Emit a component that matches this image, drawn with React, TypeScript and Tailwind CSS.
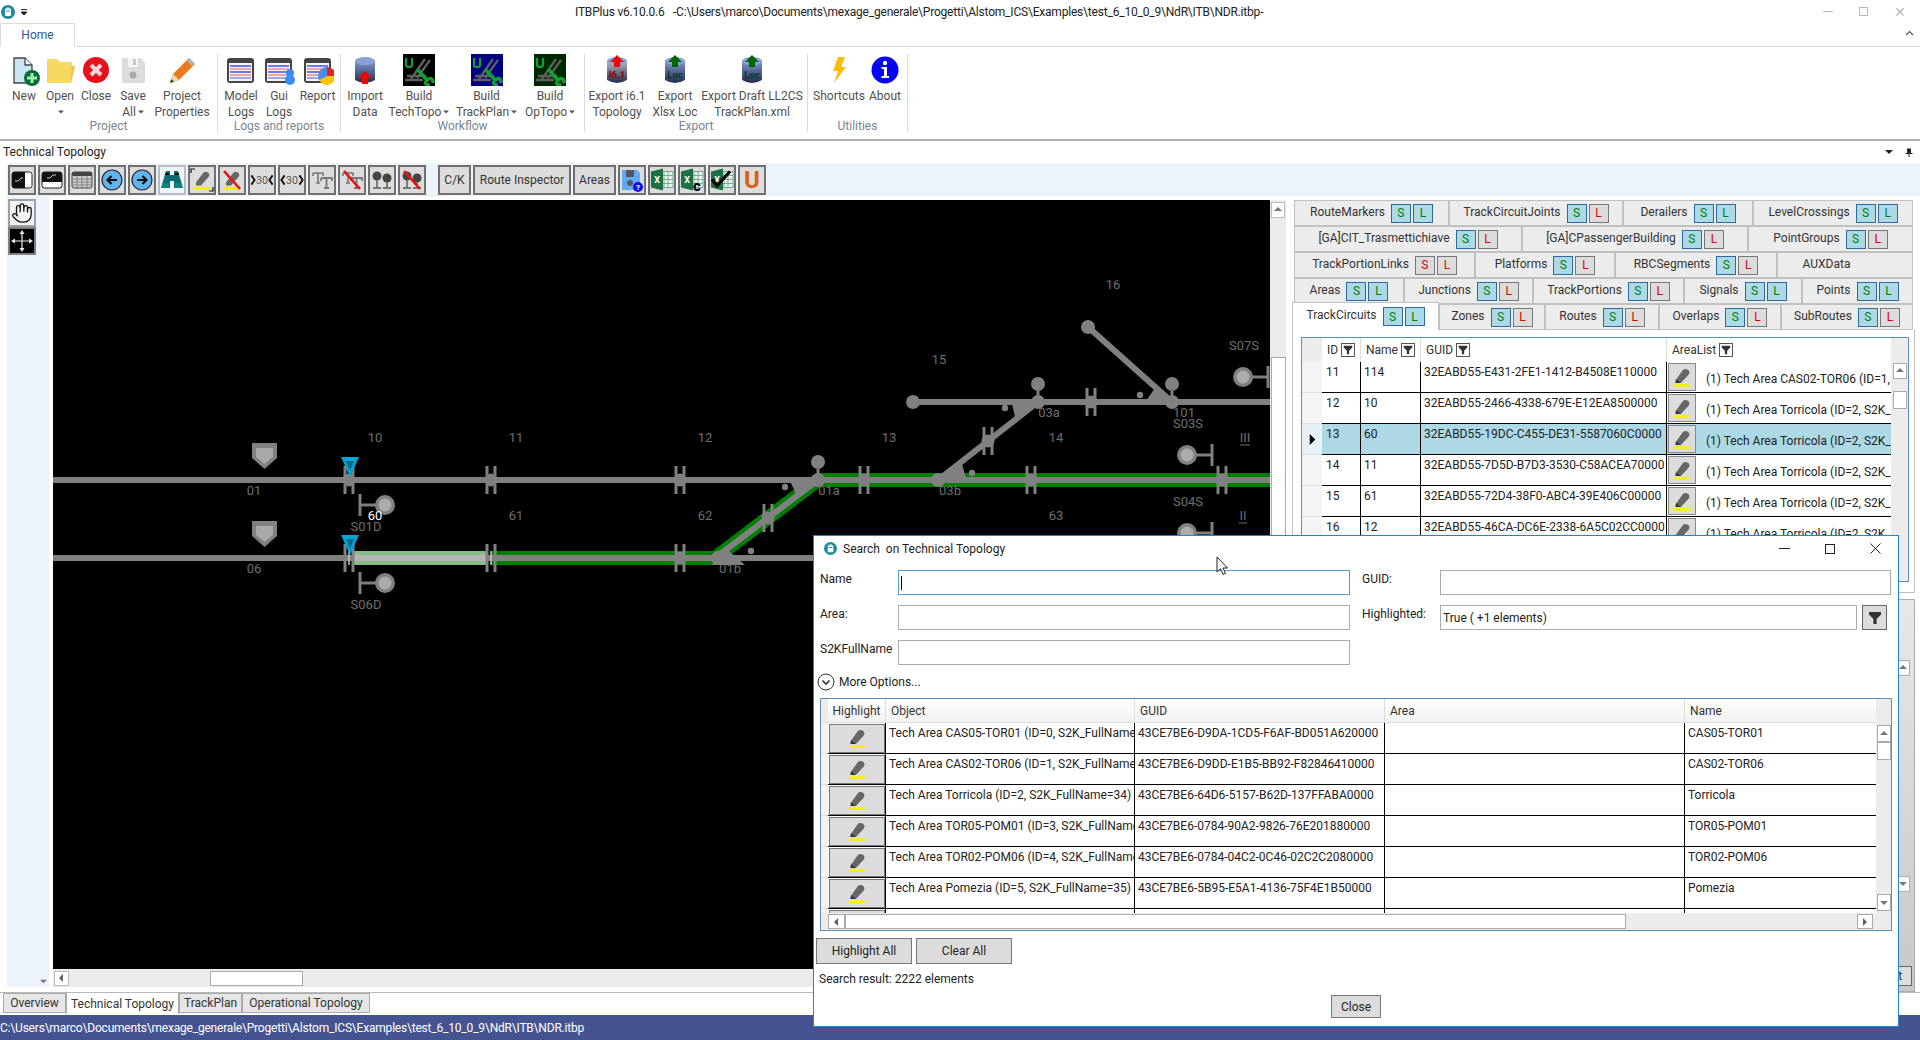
import { Hand } from "lucide-react";
import type { ReactNode } from "react";

const Arrow = ({ dir, color = "#606060", size = 8 }: { dir: "up" | "down" | "left" | "right"; color?: string; size?: number }) => {
  const pts = { up: "0,5 4,1 8,5", down: "0,2 8,2 4,6", left: "5,0 5,8 1,4", right: "2,0 2,8 6,4" }[dir];
  return (
    <svg width={size} height={size} viewBox="0 0 8 8">
      <polygon points={pts} fill={color} />
    </svg>
  );
};

const AppIcon = ({ size = 14 }: { size?: number }) => (
  <svg width={size} height={size} viewBox="0 0 14 14">
    <circle cx="7" cy="7" r="7" fill="#1d8a9e" />
    <rect x="4" y="3.5" width="6" height="7.5" rx="1" fill="#fff" />
    <rect x="5" y="5.5" width="4" height="1" fill="#1d8a9e" />
    <rect x="5.5" y="2.5" width="3" height="1.5" fill="#cde" />
  </svg>
);

const Marker = ({ size = 22 }: { size?: number }) => (
  <svg width={size} height={size} viewBox="0 0 20 20">
    <path d="M4.5 12.5 L11 3.5 Q13 1.8 15.5 3.5 Q17.8 5.5 16 8 L9 15.5 L4.5 15.5 Z" fill="#666" />
    <path d="M4 15.5 L4.5 12 L9 15.5 Z" fill="#333" />
    <rect x="3" y="16.5" width="14" height="2.5" fill="#f8f000" />
  </svg>
);

const Slash = () => <line x1="4" y1="3" x2="20" y2="21" stroke="#ee1111" strokeWidth="2.6" />;

const NewIcon = () => (
  <svg width="32" height="32" viewBox="0 0 32 32">
    <path d="M6 4 H17 L24 11 V29 H6 Z" fill="#cbe6f2" stroke="#444" strokeWidth="1.3" />
    <path d="M17 4 V11 H24" fill="#fff" stroke="#444" strokeWidth="1.3" />
    <circle cx="24" cy="24" r="8" fill="#0a6b3a" />
    <path d="M24 19 V29 M19 24 H29" stroke="#9ff0a8" strokeWidth="3" />
  </svg>
);
const FolderIcon = () => (
  <svg width="32" height="32" viewBox="0 0 32 32">
    <path d="M3 5 H13 L16 8 H28 V12 H31 L27 29 H3 Z" fill="#f7d860" />
    <path d="M27 12 H31 L27 29 Z" fill="#eec94a" />
  </svg>
);
const CloseIcon = () => (
  <svg width="32" height="32" viewBox="0 0 32 32">
    <circle cx="16" cy="16" r="13" fill="#e8101c" />
    <path d="M11 11 L21 21 M21 11 L11 21" stroke="#f6d8d8" strokeWidth="4" />
  </svg>
);
const SaveIcon = () => (
  <svg width="32" height="32" viewBox="0 0 32 32">
    <path d="M5 4 H24 L28 9 V29 H5 Z" fill="#dcdcdc" />
    <rect x="11" y="4" width="10" height="9" fill="#f4f4f4" />
    <rect x="16" y="5" width="3" height="6" fill="#c8c8c8" />
    <circle cx="16" cy="21" r="3.5" fill="#a8a8a8" />
  </svg>
);
const PencilIcon = () => (
  <svg width="32" height="32" viewBox="0 0 32 32">
    <path d="M4 29 L7 20 L23 4 L29 10 L13 26 Z" fill="#ea7a1e" />
    <path d="M23 4 L29 10 L26.5 12.5 L20.5 6.5 Z" fill="#b0b0b0" />
    <path d="M4 29 L7 20 L13 26 Z" fill="#f3d9b0" />
    <path d="M4 29 L5.4 25 L8 27.5 Z" fill="#333" />
  </svg>
);
const LogIcon = ({ extra }: { extra?: "blob" | "pie" }) => (
  <svg width="32" height="32" viewBox="0 0 32 32">
    <rect x="2" y="4" width="27" height="25" rx="3" fill="#444" />
    <rect x="4" y="9" width="23" height="18" fill="#f4f4f4" />
    <path d="M5 12 H26" stroke="#3a50ff" strokeWidth="1.5" />
    <path d="M5 15 H26" stroke="#f08a8a" strokeWidth="1.5" />
    <path d="M5 18 H26" stroke="#3a50ff" strokeWidth="1.5" />
    <path d="M5 21 H26" stroke="#f08a8a" strokeWidth="1.5" />
    <path d="M5 24 H26" stroke="#8a8af0" strokeWidth="1.5" />
    {extra === "blob" && (
      <g fill="#3d8df0">
        <circle cx="27" cy="19" r="4" />
        <circle cx="27" cy="26" r="5" />
      </g>
    )}
    {extra === "pie" && (
      <g>
        <path d="M25 22 V13 A9 9 0 0 1 34 22 Z" fill="#e82020" />
        <path d="M25 22 H34 A9 9 0 0 1 17 26 Z" fill="#f7c400" />
        <path d="M25 22 L17 26 A9 9 0 0 1 25 13 Z" fill="#4a8ae8" />
      </g>
    )}
  </svg>
);
const Cylinder = ({ id, arrow, bottom, label, labelColor, top = "#7f99cf" }: { id: string; arrow: string; bottom?: boolean; label?: string; labelColor?: string; top?: string }) => (
  <svg width="32" height="32" viewBox="0 0 32 32">
    <defs>
      <linearGradient id={id} x1="0" y1="0" x2="0" y2="1">
        <stop offset="0" stopColor={top} />
        <stop offset="1" stopColor="#222c48" />
      </linearGradient>
    </defs>
    <path d="M6 7 H26 V26 Q16 32 6 26 Z" fill={`url(#${id})`} />
    <ellipse cx="16" cy="7" rx="10" ry="4" fill="#8aa3d6" />
    {label && (
      <text x="16" y="24" textAnchor="middle" fontSize="9.5" fontWeight="700" fill={labelColor}>
        {label}
      </text>
    )}
    {bottom ? <path d="M16 17 L23 24 H19 V30 H13 V24 H9 Z" fill={arrow} /> : <path d="M16 1 L23 8 H19 V13 H13 V8 H9 Z" fill={arrow} />}
  </svg>
);
const BuildIcon = ({ bg }: { bg: string }) => (
  <svg width="32" height="32" viewBox="0 0 32 32">
    <rect width="32" height="32" fill={bg} />
    <path d="M3 4 V11 Q3 13 6 13 Q9 13 9 11 V4" stroke="#0aa03c" strokeWidth="2.2" fill="none" />
    <path d="M8 25 L22 5 M14 24 L27 6 M4 22 H23 M2 26 H20" stroke="#5e5e5e" strokeWidth="2.4" />
    <path d="M14 15 L24 26 M24 26 Q30 22 30 29 M24 26 Q20 31 27 31" stroke="#0ea02e" strokeWidth="3.4" fill="none" />
  </svg>
);
const BoltIcon = () => (
  <svg width="32" height="32" viewBox="0 0 32 32">
    <path d="M15 3 H22 L18 13 H23 L11 29 L15 17 H10 Z" fill="#fdbb10" />
  </svg>
);
const AboutIcon = () => (
  <svg width="32" height="32" viewBox="0 0 32 32">
    <circle cx="16" cy="16" r="13.5" fill="#0505f5" />
    <circle cx="16" cy="9" r="2.2" fill="#fff" />
    <path d="M12.5 13 H18 V22 H20 V24 H12.5 V22 H15 V15 H12.5 Z" fill="#fff" />
  </svg>
);

const RibbonBtn = ({ w, icon, lines, dropdown }: { w: number; icon: ReactNode; lines: string[]; dropdown?: boolean }) => (
  <div className="flex flex-col items-center text-[12px] text-[#505050] leading-[16px] whitespace-nowrap shrink-0" style={{ width: w }}>
    <div className="h-[32px] mb-[2px] flex items-center justify-center">{icon}</div>
    <div>{lines[0]}</div>
    <div className="flex items-center justify-center h-[16px]">
      {lines[1]}
      {dropdown && (
        <span className="ml-[2px]">
          <Arrow dir="down" color="#555" size={6} />
        </span>
      )}
    </div>
  </div>
);

const RibbonGroup = ({ w, pl, label, children }: { w: number; pl: number; label: string; children: ReactNode }) => (
  <div className="h-[78px] border-r border-[#dcdcdc] flex flex-col shrink-0" style={{ width: w, paddingLeft: pl }}>
    <div className="flex h-[66px]">{children}</div>
    <div className="text-[12px] leading-[12px] text-center text-[#7a8594]" style={{ marginLeft: -pl }}>
      {label}
    </div>
  </div>
);

const TBtn = ({ children, light }: { children: ReactNode; light?: boolean }) => (
  <div className={`w-[28px] h-[30px] border-2 flex items-center justify-center shrink-0 ${light ? "bg-[#f2f5f8] border-[#b4bcc4]" : "bg-[#dcdcdc] border-[#707070]"}`}>{children}</div>
);

const WinIcon = ({ side }: { side: "left" | "top" }) => (
  <svg width="24" height="24" viewBox="0 0 24 24">
    <rect x="2" y="4" width="20" height="16" rx="2.5" fill="#fff" stroke="#222" strokeWidth="1" />
    {side === "left" ? <path d="M4 4 H15 V20 H4 Q2 20 2 18 V6 Q2 4 4 4 Z" fill="#111" /> : <path d="M4 4 H20 Q22 4 22 6 V14 H2 V6 Q2 4 4 4 Z" fill="#111" />}
    <path d={side === "left" ? "M5 13 H8 L11 10 H13" : "M7 10 H10 L13 7 H16"} stroke="#ccc" strokeWidth="1" fill="none" />
  </svg>
);
const TableIcon = () => (
  <svg width="24" height="24" viewBox="0 0 24 24">
    <rect x="2" y="4" width="20" height="16" rx="2" fill="#ccc" stroke="#444" />
    <rect x="2" y="4" width="20" height="4" rx="1.5" fill="#444" />
    <path d="M2 11 H22 M2 14 H22 M2 17 H22 M7 8 V20 M12 8 V20 M17 8 V20" stroke="#777" strokeWidth="0.8" />
  </svg>
);
const CircleArrow = ({ right }: { right?: boolean }) => (
  <svg width="24" height="24" viewBox="0 0 24 24">
    <circle cx="12" cy="12" r="10" fill="#62b4f0" stroke="#223" strokeWidth="1.2" />
    <path d={right ? "M7 12 H16 M12.5 8 L16.5 12 L12.5 16" : "M17 12 H8 M11.5 8 L7.5 12 L11.5 16"} stroke="#111" strokeWidth="2.2" fill="none" />
  </svg>
);
const BinocularIcon = () => (
  <svg width="24" height="24" viewBox="0 0 24 24">
    <path d="M6 3 H10 V7 H14 V3 H18 L23 20 H14 V13 H10 V20 H1 Z" fill="#0a6e70" />
    <path d="M5 5 H9 V7 H5 Z M15 5 H19 V7 H15 Z" fill="#111" />
    <path d="M2 15 H9 V20 H2 Z M15 15 H22 V20 H15 Z" fill="#0a8488" />
  </svg>
);
const HighlightBtn = ({ off, corners }: { off?: boolean; corners?: boolean }) => (
  <svg width="26" height="26" viewBox="0 0 24 24">
    {corners && <path d="M1 5 V1 H5 M23 19 V23 H19" stroke="#111" strokeWidth="1.2" fill="none" />}
    <path d="M6 14.5 L13.5 4.5 Q15.5 2.8 18 4.5 Q20.2 6.5 18.5 9 L11 17.5 L6 17.5 Z" fill="#666" />
    <rect x="3" y="19" width="17" height="2.6" fill="#f8f000" />
    {off && <Slash />}
  </svg>
);
const ThirtyIcon = ({ out }: { out?: boolean }) => (
  <svg width="26" height="24" viewBox="0 0 26 24">
    <path d={out ? "M5 7 L1.5 12 L5 17 M21 7 L24.5 12 L21 17" : "M1.5 7 L5 12 L1.5 17 M24.5 7 L21 12 L24.5 17"} stroke="#111" strokeWidth="2" fill="none" />
    <text x="13" y="16" textAnchor="middle" fontSize="11.5" fill="#555">30</text>
  </svg>
);
const TTIcon = ({ off }: { off?: boolean }) => (
  <svg width="24" height="24" viewBox="0 0 24 24">
    <path d="M3 5 H13 V8 M8 5 V15 M6 15 H10 M3 5 V8" stroke="#777" strokeWidth="1.6" fill="none" />
    <path d="M11 10 H22 V13 M16.5 10 V20 M14 20 H19 M11 10 V13" stroke="#777" strokeWidth="1.8" fill="none" />
    {off && <Slash />}
  </svg>
);
const SignalsIcon = ({ off }: { off?: boolean }) => (
  <svg width="24" height="24" viewBox="0 0 24 24">
    <g fill="#444">
      <circle cx="7" cy="8" r="4.5" />
      <circle cx="17" cy="10" r="4.5" />
      <path d="M6 12 H8 V19 H11 V21 H3 V19 H6 Z M16 14 H18 V19 H21 V21 H13 V19 H16 Z" fill="#777" />
    </g>
    {off && <Slash />}
  </svg>
);
const FloppyQ = () => (
  <svg width="24" height="24" viewBox="0 0 24 24">
    <path d="M2 2 H17 L20 5 V22 H2 Z" fill="#63aaf5" />
    <rect x="6" y="2" width="8" height="7" fill="#556" />
    <circle cx="10" cy="15" r="3" fill="#556" />
    <circle cx="18" cy="19" r="5" fill="#1010e0" />
    <text x="18" y="22" textAnchor="middle" fontSize="8" fontWeight="700" fill="#fff">?</text>
  </svg>
);
const ExcelIcon = ({ mark }: { mark?: "c" | "v" }) => (
  <svg width="25" height="25" viewBox="0 0 24 24">
    <rect x="10" y="4" width="13" height="16" fill="#eaf3ee" stroke="#5b9a78" strokeWidth="0.8" />
    <path d="M14 4 V20 M18 4 V20 M10 8 H23 M10 12 H23 M10 16 H23" stroke="#5b9a78" strokeWidth="0.8" />
    <path d="M1 4 L13 1 V23 L1 20 Z" fill="#1c7044" />
    <text x="7" y="15" textAnchor="middle" fontSize="9" fontWeight="700" fill="#fff">X</text>
    {mark === "c" && <text x="17" y="23" textAnchor="middle" fontSize="15" fontWeight="800" fill="#000">c</text>}
    {mark === "v" && <path d="M2 12 L7 18 L20 4" stroke="#000" strokeWidth="3.2" fill="none" />}
  </svg>
);
const MoveIcon = () => (
  <svg width="24" height="24" viewBox="0 0 24 24">
    <path d="M12 3 V21 M3 12 H21" stroke="#eee" strokeWidth="1.2" />
    <path d="M12 1 L14.5 5 H9.5 Z M12 23 L14.5 19 H9.5 Z M1 12 L5 9.5 V14.5 Z M23 12 L19 9.5 V14.5 Z" fill="#eee" />
  </svg>
);
const FilterIcon = ({ size = 14 }: { size?: number }) => (
  <svg width={size} height={size} viewBox="0 0 14 14">
    <path d="M1 1 H13 V3.5 L8.6 8 V13 H5.4 V8 L1 3.5 Z" fill="#333" />
  </svg>
);

const Title = () => (
  <div className="h-[23px] relative flex items-center text-[12px] text-[#222] shrink-0">
    <div className="pl-[1px] flex items-center">
      <AppIcon />
      <span className="ml-[5px]">
        <svg width="8" height="8" viewBox="0 0 8 8">
          <path d="M1 1.5 H7 M1 4 H7 L4 7 L1 4" stroke="#222" strokeWidth="1" fill="#222" />
        </svg>
      </span>
    </div>
    <div className="ml-[547px] whitespace-pre tracking-[-0.2px]">ITBPlus v6.10.0.6 &nbsp; -C:\Users\marco\Documents\mexage_generale\Progetti\Alstom_ICS\Examples\test_6_10_0_9\NdR\ITB\NDR.itbp-</div>
    <div className="ml-auto flex items-center gap-[26px] pr-[14px] text-[#b8b8b8]">
      <span className="w-[10px] h-[1px] bg-[#b8b8b8]" />
      <span className="w-[9px] h-[9px] border border-[#b8b8b8]" />
      <span className="text-[14px] leading-[14px]">✕</span>
    </div>
  </div>
);

const TabStrip = () => (
  <div className="h-[24px] border-b border-[#dcdcdc] flex shrink-0 relative">
    <div className="w-[75px] h-[24px] border border-[#dcdcdc] border-b-white bg-white text-[12px] text-[#2b579a] flex items-center justify-center">Home</div>
    <div className="ml-auto pr-[6px] pt-[7px]">
      <svg width="9" height="7" viewBox="0 0 9 7">
        <path d="M1 5 L4.5 1.5 L8 5" stroke="#555" strokeWidth="1.2" fill="none" />
      </svg>
    </div>
  </div>
);

const Ribbon = () => (
  <div className="h-[94px] border-b-2 border-[#b0b0b0] flex pt-[7px] shrink-0">
    <RibbonGroup w={218} pl={6} label="Project">
      <RibbonBtn w={36} icon={<NewIcon />} lines={["New", ""]} />
      <RibbonBtn w={36} icon={<FolderIcon />} lines={["Open", ""]} dropdown />
      <RibbonBtn w={36} icon={<CloseIcon />} lines={["Close", ""]} />
      <RibbonBtn w={38} icon={<SaveIcon />} lines={["Save", "All"]} dropdown />
      <RibbonBtn w={60} icon={<PencilIcon />} lines={["Project", "Properties"]} />
    </RibbonGroup>
    <RibbonGroup w={123} pl={4} label="Logs and reports">
      <RibbonBtn w={38} icon={<LogIcon />} lines={["Model", "Logs"]} />
      <RibbonBtn w={38} icon={<LogIcon extra="blob" />} lines={["Gui", "Logs"]} />
      <RibbonBtn w={39} icon={<LogIcon extra="pie" />} lines={["Report", ""]} />
    </RibbonGroup>
    <RibbonGroup w={244} pl={4} label="Workflow">
      <RibbonBtn w={40} icon={<Cylinder id="cylImport" arrow="#e80a0a" bottom />} lines={["Import", "Data"]} />
      <RibbonBtn w={68} icon={<BuildIcon bg="#000000" />} lines={["Build", "TechTopo"]} dropdown />
      <RibbonBtn w={67} icon={<BuildIcon bg="#000080" />} lines={["Build", "TrackPlan"]} dropdown />
      <RibbonBtn w={60} icon={<BuildIcon bg="#002800" />} lines={["Build", "OpTopo"]} dropdown />
    </RibbonGroup>
    <RibbonGroup w={223} pl={5} label="Export">
      <RibbonBtn w={54} icon={<Cylinder id="cylI6" arrow="#e80a0a" label="I6.1" labelColor="#8a0000" top="#b8b8c8" />} lines={["Export i6.1", "Topology"]} />
      <RibbonBtn w={62} icon={<Cylinder id="cylLoc1" arrow="#006400" label="Loc" labelColor="#063a2a" />} lines={["Export", "Xlsx Loc"]} />
      <RibbonBtn w={92} icon={<Cylinder id="cylLoc2" arrow="#006400" label="Loc" labelColor="#063a2a" />} lines={["Export Draft LL2CS", "TrackPlan.xml"]} />
    </RibbonGroup>
    <RibbonGroup w={100} pl={4} label="Utilities">
      <RibbonBtn w={54} icon={<BoltIcon />} lines={["Shortcuts", ""]} />
      <RibbonBtn w={38} icon={<AboutIcon />} lines={["About", ""]} />
    </RibbonGroup>
  </div>
);

const Toolbar = () => (
  <div className="h-[33px] ml-[7px] bg-[#edf3fb] flex items-center gap-[2px] pl-[1px] shrink-0 relative">
    <TBtn><WinIcon side="left" /></TBtn>
    <TBtn><WinIcon side="top" /></TBtn>
    <TBtn><TableIcon /></TBtn>
    <TBtn><CircleArrow /></TBtn>
    <TBtn><CircleArrow right /></TBtn>
    <TBtn light><BinocularIcon /></TBtn>
    <TBtn><HighlightBtn corners /></TBtn>
    <TBtn><HighlightBtn off /></TBtn>
    <TBtn><ThirtyIcon /></TBtn>
    <TBtn><ThirtyIcon out /></TBtn>
    <TBtn><TTIcon /></TBtn>
    <TBtn><TTIcon off /></TBtn>
    <TBtn><SignalsIcon /></TBtn>
    <TBtn><SignalsIcon off /></TBtn>
    <div className="ml-[10px] h-[30px] w-[33px] border-2 border-[#707070] bg-[#dcdcdc] text-[12px] text-[#333] flex items-center justify-center">C/K</div>
    <div className="h-[30px] w-[98px] border-2 border-[#707070] bg-[#dcdcdc] text-[12px] text-[#333] flex items-center justify-center">Route Inspector</div>
    <div className="h-[30px] w-[43px] border-2 border-[#707070] bg-[#dcdcdc] text-[12px] text-[#333] flex items-center justify-center">Areas</div>
    <TBtn><FloppyQ /></TBtn>
    <TBtn><ExcelIcon /></TBtn>
    <TBtn><ExcelIcon mark="c" /></TBtn>
    <TBtn><ExcelIcon mark="v" /></TBtn>
    <TBtn><span className="text-[#d95f0e] text-[24px] font-bold leading-none">U</span></TBtn>
  </div>
);

const Joint = ({ x, y, blob = true }: { x: number; y: number; blob?: boolean }) => (
  <g>
    <path d={`M${x - 4} ${y - 14} V${y + 14} M${x + 4} ${y - 14} V${y + 14}`} stroke="#808080" strokeWidth="3" />
    {blob ? <circle cx={x} cy={y} r="6.5" fill="#808080" /> : <path d={`M${x} ${y - 7} V${y + 7}`} stroke="#c8c8c8" strokeWidth="1.5" />}
  </g>
);
const Sig = ({ cx, cy, barX }: { cx: number; cy: number; barX: number }) => (
  <g>
    <path d={`M${cx} ${cy} H${barX}`} stroke="#808080" strokeWidth="3" />
    <path d={`M${barX} ${cy - 11} V${cy + 11}`} stroke="#808080" strokeWidth="3" />
    <circle cx={cx} cy={cy} r="10" fill="#808080" />
    <circle cx={cx} cy={cy} r="6.5" fill="#ababab" />
  </g>
);
const Shield = ({ y }: { y: number }) => (
  <g>
    <path d={`M252 ${y} H277 V${y + 15} L264.5 ${y + 26} L252 ${y + 15} Z`} fill="#808080" />
    <path d={`M256 ${y + 5} H273 V${y + 14} L264.5 ${y + 21} L256 ${y + 14} Z`} fill="#a8a8a8" />
  </g>
);
const Cyan = ({ y }: { y: number }) => (
  <g>
    <path d={`M341 ${y} H359 L350 ${y + 20} Z`} fill="#00a5d6" />
    <path d={`M346 ${y + 4} H354 L350 ${y + 14} Z`} fill="#0a6a8a" />
  </g>
);

const TopoCanvas = () => (
  <div className="h-[769px] bg-black overflow-hidden shrink-0">
    <svg width="1217" height="769" viewBox="53 200 1217 769">
      <path d="M818 480 H1270 M715 558 L818 480" stroke="#008000" strokeWidth="14" fill="none" />
      <rect x="491" y="551" width="226" height="14" fill="#008000" />
      <rect x="354" y="551" width="133" height="14" fill="#86bd86" />
      <g stroke="#808080" strokeWidth="6" fill="none">
        <path d="M53 480 H820 M53 558 H1010 M820 480 H1270" />
        <path d="M715 558 L818 480 M938 480 L1038 402 M913 402 H1270 M1088 327 L1172 402" />
        <path d="M818 469 V476 M1038 391 V398 M1172 391 V398" strokeWidth="3" />
      </g>
      <rect x="354" y="555" width="133" height="6" fill="#b4b4b4" />
      <g fill="#808080">
        <circle cx="913" cy="402" r="7" />
        <circle cx="1088" cy="327" r="7" />
        <circle cx="1038" cy="402" r="7" />
        <circle cx="1038" cy="384" r="7" />
        <circle cx="1172" cy="402" r="7" />
        <circle cx="1172" cy="384" r="7" />
        <circle cx="818" cy="480" r="7" />
        <circle cx="818" cy="462" r="7" />
        <circle cx="938" cy="480" r="7" />
        <circle cx="718" cy="558" r="7" />
        <circle cx="1005" cy="408" r="3.2" />
        <circle cx="1140" cy="395" r="3.2" />
        <circle cx="972" cy="473" r="3.2" />
        <circle cx="785" cy="487" r="3.2" />
        <circle cx="751" cy="551" r="3.2" />
        <path d="M1012 404 L1015 417 L1036 404 Z" />
        <path d="M1157 385 L1146 401 L1174 403 Z" />
        <path d="M940 480 L962 464 L966 478 Z" />
        <path d="M790 481 L797 496 L816 481 Z" />
        <path d="M712 565 L724 547 L745 565 Z" />
      </g>
      <Joint x={349} y={480} />
      <Joint x={491} y={480} />
      <Joint x={680} y={480} />
      <Joint x={864} y={480} />
      <Joint x={1031} y={480} />
      <Joint x={1222} y={480} />
      <Joint x={349} y={558} blob={false} />
      <Joint x={491} y={558} blob={false} />
      <Joint x={680} y={558} />
      <Joint x={768} y={518} />
      <Joint x={988} y={441} />
      <Joint x={1091} y={402} />
      <Shield y={443} />
      <Shield y={521} />
      <Cyan y={457} />
      <Cyan y={535} />
      <Sig cx={385} cy={505} barX={360} />
      <Sig cx={385} cy={583} barX={360} />
      <Sig cx={1187} cy={455} barX={1212} />
      <Sig cx={1187} cy={533} barX={1212} />
      <Sig cx={1243} cy={377} barX={1268} />
      <g fill="#6e6e6e" fontSize="13" textAnchor="middle">
        {[
          ["10", 375, 442], ["11", 516, 442], ["12", 705, 442], ["13", 889, 442], ["14", 1056, 442],
          ["15", 939, 364], ["16", 1113, 289], ["61", 516, 520], ["62", 705, 520], ["63", 1056, 520],
          ["01", 254, 495], ["06", 254, 573], ["S01D", 366, 531], ["S06D", 366, 609], ["01a", 829, 495],
          ["01b", 730, 573], ["03a", 1049, 417], ["03b", 950, 495], ["101", 1184, 417], ["S03S", 1188, 428],
          ["S04S", 1188, 506], ["S07S", 1244, 350], ["III", 1245, 442], ["II", 1243, 520],
        ].map(([t, x, y]) => (
          <text key={String(t)} x={x} y={y}>{t}</text>
        ))}
      </g>
      <path d="M1240 445 H1250 M1239 523 H1247" stroke="#6e6e6e" strokeWidth="1" />
      <text x="375" y="520" fill="#fff" fontSize="13" textAnchor="middle">60</text>
    </svg>
  </div>
);

const SmallBtn = ({ letter, on }: { letter: string; on: boolean }) => (
  <span className={`w-[20px] h-[19px] border flex items-center justify-center text-[12px] shrink-0 ${on ? "bg-[#add8e6] border-[#2a6aa0] text-[#008000]" : "bg-[#dcdcdc] border-[#777] text-[#e00000]"}`}>{letter}</span>
);

type T = { w: number; label: string; s?: boolean; l?: boolean; sel?: boolean };

const ObjTab = ({ w, label, s, l, sel }: T) => (
  <div className={`flex items-center justify-center gap-[1px] text-[12px] text-[#333] border border-[#c0c0c0] shrink-0 ${sel ? "h-[28px] bg-white border-b-0 -mt-[2px]" : "h-[26px] bg-[#ececec]"} ${s === undefined ? "pr-[32px]" : ""}`} style={{ width: w }}>
    <span className="mr-[5px] -mt-[3px] whitespace-nowrap">{label}</span>
    {s !== undefined && (
      <span className="flex gap-[2px]">
        <SmallBtn letter="S" on={s} />
        <SmallBtn letter="L" on={!!l} />
      </span>
    )}
  </div>
);

const tabRows: T[][] = [
  [
    { w: 155, label: "RouteMarkers", s: true, l: true },
    { w: 174, label: "TrackCircuitJoints", s: true, l: false },
    { w: 130, label: "Derailers", s: true, l: true },
    { w: 160, label: "LevelCrossings", s: true, l: true },
  ],
  [
    { w: 228, label: "[GA]CIT_Trasmettichiave", s: true, l: false },
    { w: 226, label: "[GA]CPassengerBuilding", s: true, l: false },
    { w: 165, label: "PointGroups", s: true, l: false },
  ],
  [
    { w: 181, label: "TrackPortionLinks", s: false, l: false },
    { w: 140, label: "Platforms", s: true, l: false },
    { w: 162, label: "RBCSegments", s: true, l: false },
    { w: 136, label: "AUXData" },
  ],
  [
    { w: 110, label: "Areas", s: true, l: true },
    { w: 129, label: "Junctions", s: true, l: false },
    { w: 151, label: "TrackPortions", s: true, l: false },
    { w: 118, label: "Signals", s: true, l: true },
    { w: 111, label: "Points", s: true, l: true },
  ],
];
const lastRow: T[] = [
  { w: 147, label: "TrackCircuits", s: true, l: true, sel: true },
  { w: 106, label: "Zones", s: true, l: false },
  { w: 114, label: "Routes", s: true, l: false },
  { w: 122, label: "Overlaps", s: true, l: false },
  { w: 132, label: "SubRoutes", s: true, l: false },
];

const circuits = [
  ["11", "114", "32EABD55-E431-2FE1-1412-B4508E110000", "(1) Tech Area CAS02-TOR06 (ID=1, S2K_FullName=33)"],
  ["12", "10", "32EABD55-2466-4338-679E-E12EA8500000", "(1) Tech Area Torricola (ID=2, S2K_FullName=34)"],
  ["13", "60", "32EABD55-19DC-C455-DE31-5587060C0000", "(1) Tech Area Torricola (ID=2, S2K_FullName=34)"],
  ["14", "11", "32EABD55-7D5D-B7D3-3530-C58ACEA70000", "(1) Tech Area Torricola (ID=2, S2K_FullName=34)"],
  ["15", "61", "32EABD55-72D4-38F0-ABC4-39E406C00000", "(1) Tech Area Torricola (ID=2, S2K_FullName=34)"],
  ["16", "12", "32EABD55-46CA-DC6E-2338-6A5C02CC0000", "(1) Tech Area Torricola (ID=2, S2K_FullName=34)"],
];

const HeadFilter = () => (
  <span className="w-[14px] h-[14px] border border-[#555] flex items-center justify-center ml-[3px] bg-white shrink-0">
    <FilterIcon size={10} />
  </span>
);

const CircuitGrid = () => (
  <div className="ml-[8px] mt-[7px] w-[608px] h-[245px] border border-[#5f8fb8] flex overflow-hidden">
    <div className="w-[589px] flex flex-col shrink-0 overflow-hidden">
      <div className="h-[24px] flex text-[12px] text-[#333] shrink-0">
        <div className="w-[20px] bg-[#ececec] shrink-0" />
        <div className="w-[39px] flex items-center pl-[5px] border-r border-[#ddd]">ID<HeadFilter /></div>
        <div className="w-[60px] flex items-center pl-[5px] border-r border-[#ddd]">Name<HeadFilter /></div>
        <div className="w-[246px] flex items-center pl-[5px] border-r border-[#ddd]">GUID<HeadFilter /></div>
        <div className="flex items-center pl-[5px]">AreaList<HeadFilter /></div>
      </div>
      {circuits.map((c) => {
        const sel = c[0] === "13";
        return (
          <div key={c[0]} className={`h-[31px] flex text-[12px] text-[#222] shrink-0 ${sel ? "bg-[#add8e6]" : ""}`}>
            <div className={`w-[20px] shrink-0 border-b border-[#ddd] flex items-center justify-center ${sel ? "bg-[#e6f1f8]" : "bg-[#f4f4f4]"}`}>
              {sel && <Arrow dir="right" color="#000" size={11} />}
            </div>
            <div className="w-[39px] shrink-0 border-r border-b border-black pl-[4px] pt-[1px]">{c[0]}</div>
            <div className="w-[60px] shrink-0 border-r border-b border-black pl-[3px] pt-[1px]">{c[1]}</div>
            <div className="w-[246px] shrink-0 border-r border-b border-black pl-[3px] pt-[1px] whitespace-nowrap overflow-hidden">{c[2]}</div>
            <div className="w-[224px] shrink-0 border-b border-black flex items-center overflow-hidden whitespace-nowrap">
              <span className="w-[28px] h-[28px] ml-[1px] bg-[#dcdcdc] border border-[#888] flex items-center justify-center shrink-0">
                <Marker />
              </span>
              <span className="ml-[10px] pt-[3px]">{c[3]}</span>
            </div>
          </div>
        );
      })}
    </div>
    <div className="flex-1 bg-[#ececec] pt-[25px] flex flex-col items-center">
      <div className="w-[14px] h-[16px] bg-white border border-[#aaa] flex items-center justify-center"><Arrow dir="up" color="#777" /></div>
      <div className="w-[14px] h-[18px] bg-white border border-[#aaa] mt-[12px]" />
    </div>
  </div>
);

const RightPane = () => (
  <div className="w-[630px] ml-[4px] shrink-0 flex flex-col pt-[4px] pl-[4px]">
    {tabRows.map((r, i) => (
      <div key={i} className="flex">
        {r.map((t) => <ObjTab key={t.label} {...t} />)}
      </div>
    ))}
    <div className="flex -ml-[2px] relative z-10">
      {lastRow.map((t) => <ObjTab key={t.label} {...t} />)}
    </div>
    <div className="-ml-[2px] w-[623px] h-[263px] border border-[#c0c0c0] border-t-0 shrink-0">
      <CircuitGrid />
    </div>
    <div className="mt-[6px] -ml-[2px] w-[623px] flex-1 border border-[#aaa] bg-gradient-to-b from-[#e8e8e8] to-[#c8c8c8] flex flex-col items-end pr-[2px]">
      <div className="mr-[2px] mt-[60px] w-[14px] h-[16px] bg-white border border-[#aaa] flex items-center justify-center"><Arrow dir="up" color="#777" /></div>
      <div className="mr-[2px] mt-[200px] w-[14px] h-[16px] bg-white border border-[#aaa] flex items-center justify-center"><Arrow dir="down" color="#777" /></div>
      <div className="mt-[74px] w-[40px] h-[20px] bg-[#dcdcdc] border border-[#666] text-[12px] text-[#333] flex items-center justify-center">Edit</div>
    </div>
  </div>
);

const LeftStrip = () => (
  <div className="w-[42px] ml-[7px] bg-[#edf3fb] flex flex-col pt-[3px] pl-[1px] shrink-0 relative h-[791px]">
    <div className="w-[28px] h-[28px] bg-[#f2f2f2] border-2 border-[#a0a0a0] flex items-center justify-center">
      <Hand size={22} strokeWidth={1.4} color="#111" />
    </div>
    <div className="w-[28px] h-[28px] bg-black border-2 border-[#808080] flex items-center justify-center">
      <MoveIcon />
    </div>
    <div className="mt-auto ml-[32px] mb-[2px]"><Arrow dir="down" color="#777" size={7} /></div>
  </div>
);

const CanvasArea = () => (
  <div className="w-[1233px] ml-[4px] flex flex-col pt-[4px] shrink-0">
    <div className="flex">
      <div className="w-[1217px]"><TopoCanvas /></div>
      <div className="w-[16px] bg-[#ececec] flex flex-col items-center">
        <div className="w-[14px] h-[16px] bg-white border border-[#bbb] flex items-center justify-center mt-[2px]"><Arrow dir="up" color="#777" /></div>
        <div className="w-[15px] h-[300px] bg-white border border-[#aaa] mt-[139px]" />
      </div>
    </div>
    <div className="h-[18px] bg-[#ececec] flex items-center relative">
      <div className="w-[15px] h-[15px] bg-white border border-[#bbb] flex items-center justify-center ml-[1px]"><Arrow dir="left" /></div>
      <div className="w-[93px] h-[15px] bg-white border border-[#aaa] ml-[141px]" />
    </div>
  </div>
);

const BottomTabs = () => (
  <div className="h-[23px] flex pl-[3px] border-t border-[#b8b8b8] text-[12px] text-[#333] shrink-0">
    <div className="w-[63px] h-[20px] bg-[#e6e6e6] border border-[#aaa] flex items-center justify-center">Overview</div>
    <div className="w-[113px] h-[21px] bg-white border-x border-[#aaa] flex items-center justify-center">Technical Topology</div>
    <div className="w-[63px] h-[20px] bg-[#e6e6e6] border border-[#aaa] flex items-center justify-center">TrackPlan</div>
    <div className="w-[128px] h-[20px] bg-[#e6e6e6] border border-[#aaa] flex items-center justify-center">Operational Topology</div>
  </div>
);

const searchRows = [
  ["Tech Area CAS05-TOR01 (ID=0, S2K_FullName=31)", "43CE7BE6-D9DA-1CD5-F6AF-BD051A620000", "CAS05-TOR01"],
  ["Tech Area CAS02-TOR06 (ID=1, S2K_FullName=33)", "43CE7BE6-D9DD-E1B5-BB92-F82846410000", "CAS02-TOR06"],
  ["Tech Area Torricola (ID=2, S2K_FullName=34)", "43CE7BE6-64D6-5157-B62D-137FFABA0000", "Torricola"],
  ["Tech Area TOR05-POM01 (ID=3, S2K_FullName=36)", "43CE7BE6-0784-90A2-9826-76E201880000", "TOR05-POM01"],
  ["Tech Area TOR02-POM06 (ID=4, S2K_FullName=37)", "43CE7BE6-0784-04C2-0C46-02C2C2080000", "TOR02-POM06"],
  ["Tech Area Pomezia (ID=5, S2K_FullName=35)", "43CE7BE6-5B95-E5A1-4136-75F4E1B50000", "Pomezia"],
  ["", "", ""],
];

const Field = ({ label, w, active, value }: { label: string; w: number; active?: boolean; value?: string }) => (
  <div className="flex items-start h-[35px] text-[12px] text-[#222]">
    <div className="w-[78px] shrink-0 -mt-[1px] leading-[20px]">{label}</div>
    <div className={`h-[25px] border-[1.5px] flex items-center pl-[2px] ${active ? "border-[#5b9bd5]" : "border-[#aaa]"}`} style={{ width: w }}>
      {active && <span className="w-[1px] h-[14px] bg-black" />}
      {value}
    </div>
  </div>
);

const SearchDialog = () => (
  <div className="absolute left-[813px] top-[535px] w-[1086px] h-[492px] bg-white border-[1.5px] border-[#1a86d8] flex flex-col text-[12px] text-[#222] z-20">
    <div className="h-[25px] flex items-center pl-[10px] shrink-0">
      <AppIcon size={13} />
      <span className="ml-[6px]">Search &nbsp;on Technical Topology</span>
      <div className="ml-auto flex items-center pr-[17px]">
        <span className="w-[11px] h-[1px] bg-[#222]" />
        <span className="w-[10px] h-[10px] border border-[#222] ml-[35px]" />
        <svg className="ml-[35px]" width="11" height="11" viewBox="0 0 11 11">
          <path d="M0.5 0.5 L10.5 10.5 M10.5 0.5 L0.5 10.5" stroke="#222" strokeWidth="1" />
        </svg>
      </div>
    </div>
    <div className="flex pl-[6px] pt-[9px] shrink-0">
      <div className="w-[542px] flex flex-col">
        <Field label="Name" w={452} active />
        <Field label="Area:" w={452} />
        <Field label="S2KFullName" w={452} />
      </div>
      <div className="flex flex-col">
        <Field label="GUID:" w={451} />
        <div className="flex items-start">
          <Field label="Highlighted:" w={417} value="True ( +1 elements)" />
          <div className="ml-[5px] w-[25px] h-[25px] bg-[#dcdcdc] border border-[#666] flex items-center justify-center"><FilterIcon /></div>
        </div>
      </div>
    </div>
    <div className="flex items-center pl-[3px] h-[18px] -mt-[2px] shrink-0">
      <svg width="18" height="18" viewBox="0 0 18 18">
        <circle cx="9" cy="9" r="8" fill="#fff" stroke="#333" />
        <path d="M5.5 7.5 L9 11 L12.5 7.5" stroke="#333" strokeWidth="1.6" fill="none" />
      </svg>
      <span className="ml-[4px]">More Options...</span>
    </div>
    <div className="ml-[6px] mt-[7px] w-[1072px] h-[233px] border border-[#5f8fb8] flex flex-col shrink-0">
      <div className="h-[214px] flex overflow-hidden shrink-0">
        <div className="w-[1055px] flex flex-col shrink-0 overflow-hidden">
          <div className="h-[24px] flex border-b border-[#ddd] bg-gradient-to-b from-white to-[#f2f2f2] text-[#333] shrink-0">
            <div className="w-[7px] bg-[#ececec] shrink-0" />
            <div className="w-[58px] flex items-center justify-center border-r border-[#ddd] shrink-0">Highlight</div>
            <div className="w-[249px] flex items-center pl-[5px] border-r border-[#ddd] shrink-0">Object</div>
            <div className="w-[250px] flex items-center pl-[5px] border-r border-[#ddd] shrink-0">GUID</div>
            <div className="w-[300px] flex items-center pl-[5px] border-r border-[#ddd] shrink-0">Area</div>
            <div className="flex items-center pl-[5px]">Name</div>
          </div>
          {searchRows.map((r, i) => (
            <div key={i} className="h-[31px] flex shrink-0">
              <div className="w-[7px] bg-[#f4f4f4] border-b border-[#ddd] shrink-0" />
              <div className="w-[58px] border-r border-b border-black flex items-center pl-[1px] shrink-0">
                <span className="w-[56px] h-[29px] bg-[#dcdcdc] border border-[#777] flex items-center justify-center">
                  {r[0] && <Marker />}
                </span>
              </div>
              <div className="w-[249px] border-r border-b border-black pl-[3px] pt-[1px] whitespace-nowrap overflow-hidden shrink-0">{r[0]}</div>
              <div className="w-[250px] border-r border-b border-black pl-[3px] pt-[1px] whitespace-nowrap overflow-hidden shrink-0">{r[1]}</div>
              <div className="w-[300px] border-r border-b border-black shrink-0" />
              <div className="w-[191px] border-b border-black pl-[3px] pt-[1px] shrink-0">{r[2]}</div>
            </div>
          ))}
        </div>
        <div className="flex-1 bg-[#ececec] pt-[26px] flex flex-col items-center">
          <div className="w-[14px] h-[17px] bg-white border border-[#aaa] flex items-center justify-center"><Arrow dir="up" color="#777" /></div>
          <div className="w-[14px] h-[18px] bg-white border border-[#aaa]" />
          <div className="mt-auto mb-[2px] w-[14px] h-[17px] bg-white border border-[#aaa] flex items-center justify-center"><Arrow dir="down" color="#777" /></div>
        </div>
      </div>
      <div className="flex-1 bg-[#ececec] flex items-center pl-[7px]">
        <div className="w-[17px] h-[15px] bg-white border border-[#aaa] flex items-center justify-center"><Arrow dir="left" /></div>
        <div className="w-[781px] h-[15px] bg-white border border-[#aaa]" />
        <div className="ml-[231px] w-[16px] h-[15px] bg-white border border-[#aaa] flex items-center justify-center"><Arrow dir="right" /></div>
      </div>
    </div>
    <div className="flex gap-[4px] ml-[2px] mt-[7px] shrink-0">
      <div className="w-[96px] h-[26px] bg-[#dcdcdc] border border-[#777] flex items-center justify-center">Highlight All</div>
      <div className="w-[96px] h-[26px] bg-[#dcdcdc] border border-[#777] flex items-center justify-center">Clear All</div>
    </div>
    <div className="ml-[5px] mt-[6px] shrink-0">Search result: 2222 elements</div>
    <div className="ml-[517px] mt-[7px] w-[50px] h-[23px] bg-[#dcdcdc] border border-[#777] flex items-center justify-center shrink-0">Close</div>
  </div>
);

export default function App() {
  return (
    <div className="w-[1920px] h-[1040px] bg-white relative overflow-hidden flex flex-col [font-family:Roboto,sans-serif]">
      <Title />
      <TabStrip />
      <Ribbon />
      <div className="h-[22px] flex items-center pl-[3px] text-[12px] text-[#222] shrink-0 relative">
        Technical Topology
        <div className="ml-auto pr-[7px] flex items-center gap-[12px]">
          <Arrow dir="down" color="#222" />
          <svg width="8" height="9" viewBox="0 0 8 9"><path d="M2 0.5 H6 V5 H7.5 V6 H4.5 V9 H3.5 V6 H0.5 V5 H2 Z" fill="#222" /></svg>
        </div>
      </div>
      <Toolbar />
      <div className="flex flex-1 min-h-0">
        <LeftStrip />
        <CanvasArea />
        <RightPane />
      </div>
      <BottomTabs />
      <div className="h-[25px] bg-[#465391] text-white text-[12px] flex items-center shrink-0 whitespace-nowrap tracking-[-0.2px]">C:\Users\marco\Documents\mexage_generale\Progetti\Alstom_ICS\Examples\test_6_10_0_9\NdR\ITB\NDR.itbp</div>
      <SearchDialog />
      <svg className="absolute left-[1216px] top-[556px] z-30" width="13" height="20" viewBox="0 0 13 20">
        <path d="M1 1 V16 L4.5 12.8 L7 18.5 L9.5 17.4 L7 12 H11.5 Z" fill="#fff" stroke="#222" strokeWidth="1" />
      </svg>
    </div>
  );
}
